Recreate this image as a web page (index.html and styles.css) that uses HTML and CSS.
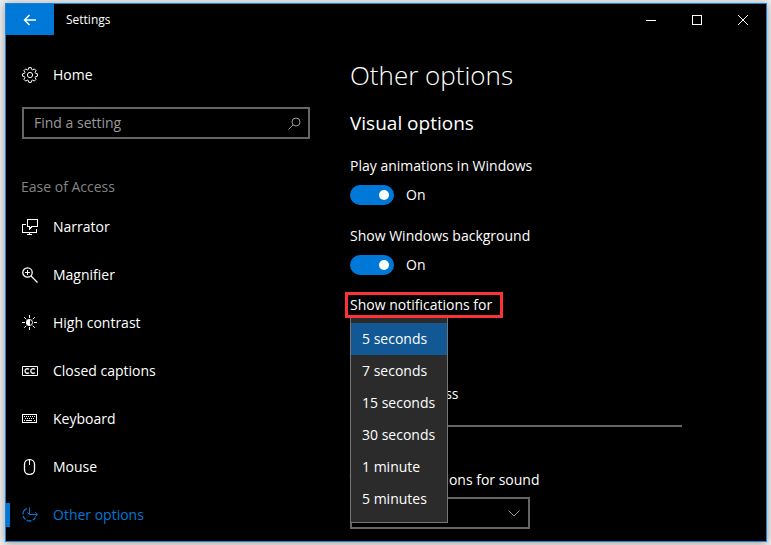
FILE: index.html
```
<!DOCTYPE html>
<html lang="en">
<head>
    <meta charset="UTF-8">
    <meta name="viewport" content="width=device-width, initial-scale=1.0">
    <title>Settings</title>
    <link rel="stylesheet" href="styles.css">
</head>
<body>
    <div class="window">
        <header class="titlebar">
            <button class="back" type="button" aria-label="Back">
                <svg width="14" height="12" viewBox="0 0 14 12"><path d="M13 6H1.5M6.5 1l-5 5 5 5"/></svg>
            </button>
            <span class="title">Settings</span>
            <button class="control" type="button" aria-label="Minimize">
                <svg width="10" height="10" viewBox="0 0 10 10" shape-rendering="crispEdges"><path d="M0 5.5h10"/></svg>
            </button>
            <button class="control" type="button" aria-label="Maximize">
                <svg width="10" height="10" viewBox="0 0 10 10" shape-rendering="crispEdges"><path d="M.5.5h9v9h-9z"/></svg>
            </button>
            <button class="control" type="button" aria-label="Close">
                <svg width="10" height="10" viewBox="0 0 10 10"><path d="M0 0l10 10M10 0L0 10"/></svg>
            </button>
        </header>

        <div class="content">
            <nav class="sidebar">
                <a class="item" href="#home">
                    <svg class="icon" viewBox="0 0 16 16">
                        <path d="M6.8.6h2.4l.4 1.8 1.1.5 1.6-1 1.8 1.8-1 1.6.5 1.1 1.8.4v2.4l-1.8.4-.5 1.1 1 1.6-1.8 1.8-1.6-1-1.1.5-.4 1.8H6.8l-.4-1.8-1.1-.5-1.6 1-1.8-1.8 1-1.6-.5-1.1-1.8-.4V6.8l1.8-.4.5-1.1-1-1.6 1.8-1.8 1.6 1 1.1-.5z"/>
                        <circle cx="8" cy="8" r="2.6"/>
                    </svg>
                    Home
                </a>
                <div class="search">
                    <input type="text" placeholder="Find a setting" aria-label="Find a setting">
                    <svg width="13" height="13" viewBox="0 0 13 13"><circle cx="8" cy="5" r="4"/><path d="M5 8L.5 12.5"/></svg>
                </div>
                <h3 class="group">Ease of Access</h3>
                <a class="item" href="#narrator">
                    <svg class="icon" viewBox="0 0 16 16" shape-rendering="crispEdges">
                        <path d="M4 5.5H.5v8h14V9.5M7.5 13.5v2M5 15.5h5M5.5.5h10v7H10L7.5 10V7.5h-2z"/>
                    </svg>
                    Narrator
                </a>
                <a class="item" href="#magnifier">
                    <svg class="icon" viewBox="0 0 16 16">
                        <circle class="bold" cx="5.500" cy="5.500" r="4.700"/>
                        <path class="bold" d="M9 9l6.500 6.500"/>
                        <path d="M5.500 3v5M3 5.500h5"/>
                    </svg>
                    Magnifier
                </a>
                <a class="item" href="#contrast">
                    <svg class="icon" viewBox="0 0 16 16">
                        <circle cx="7.5" cy="7.5" r="3"/>
                        <path class="solid" d="M7.5 4.5a3 3 0 0 0 0 6z"/>
                        <path d="M7.5 0v3M7.5 12v3M0 7.5h3M12 7.5h3M2.2 2.2l2.1 2.1M10.7 10.7l2.1 2.1M12.8 2.2l-2.1 2.1M4.3 10.7l-2.1 2.1"/>
                    </svg>
                    High contrast
                </a>
                <a class="item" href="#captions">
                    <svg class="icon" viewBox="0 0 16 16">
                        <path d="M.5 3.5h15v9H.5z"/>
                        <path class="bold" d="M7.200 6.300C5.200 5.100 3 6 3 8s2.200 2.900 4.200 1.700M13 6.300C11 5.100 8.800 6 8.800 8s2.200 2.900 4.200 1.700"/>
                    </svg>
                    Closed captions
                </a>
                <a class="item" href="#keyboard">
                    <svg class="icon" viewBox="0 0 16 16" shape-rendering="crispEdges">
                        <path d="M.5 3.5h14v8H.5zM2 5.5h1M4 5.5h1M6 5.5h1M8 5.5h1M10 5.5h1M12 5.5h1M3 7.5h1M5 7.5h1M7 7.5h1M9 7.5h1M11 7.5h1M2 9.5h1M4 9.5h6M12 9.5h1"/>
                    </svg>
                    Keyboard
                </a>
                <a class="item" href="#mouse">
                    <svg class="icon" viewBox="0 0 16 16">
                        <rect class="bold" x="2.5" y=".7" width="10" height="14.600" rx="4.500"/>
                        <path d="M7.5 1v5"/>
                    </svg>
                    Mouse
                </a>
                <a class="item active" href="#other" aria-current="page">
                    <svg class="icon" viewBox="0 0 16 16">
                        <path d="M7.5.5v7h8M13.200 5.200l2.300 2.300-2.300 2.300M5.500 5.500l2 2"/>
                        <path class="bold" d="M5 1.500A6.500 6.500 0 0 0 1 7.500M1.200 9A6.500 6.500 0 0 0 3.500 12.600M4.800 13.400A6.500 6.500 0 0 0 9.500 13.700M10.800 13.100A6.500 6.500 0 0 0 13.300 10.500"/>
                    </svg>
                    Other options
                </a>
            </nav>

            <main class="main">
                <h1>Other options</h1>
                <h2>Visual options</h2>

                <div class="field">
                    <label for="animations">Play animations in Windows</label>
                    <div class="switch">
                        <input type="checkbox" id="animations" checked>
                        <span>On</span>
                    </div>
                </div>
                <div class="field">
                    <label for="background">Show Windows background</label>
                    <div class="switch">
                        <input type="checkbox" id="background" checked>
                        <span>On</span>
                    </div>
                </div>
                <div class="field open">
                    <label class="marked" for="duration">Show notifications for</label>
                    <select class="menu" id="duration" size="6">
                        <option selected>5 seconds</option>
                        <option>7 seconds</option>
                        <option>15 seconds</option>
                        <option>30 seconds</option>
                        <option>1 minute</option>
                        <option>5 minutes</option>
                    </select>
                </div>
                <div class="field">
                    <label for="thickness">Cursor thickness</label>
                    <input class="slider" type="range" id="thickness" min="1" max="20" value="1">
                </div>
                <div class="field sound">
                    <label for="sound">Visual notifications for sound</label>
                    <div class="dropdown">
                        <select id="sound">
                            <option>None</option>
                        </select>
                        <svg width="12" height="7" viewBox="0 0 12 7"><path d="M.5.5L6 6 11.5.5"/></svg>
                    </div>
                </div>
            </main>
        </div>
    </div>
</body>
</html>
```
FILE: styles.css
```
* {
    box-sizing: border-box;
}

body {
    margin: 0;
    padding: 3px 4px 3px 5px;
    min-height: 100vh;
    display: flex;
    background-color: #ececec;
    font-family: "Open Sans", "Noto Sans", sans-serif;
    font-size: 14px;
    line-height: 20px;
    color: #fff;
}

button, input, select {
    font: inherit;
    color: inherit;
    margin: 0;
}

svg {
    fill: none;
    stroke: currentColor;
    flex-shrink: 0;
}

.window {
    flex: 1;
    border: 1px solid #1883d7;
    background-color: #000;
    box-shadow: 0 1px 8px rgba(0, 0, 0, 0.35);
}

/* title bar */
.titlebar {
    display: flex;
    height: 31px;
    font-size: 12px;
}

.titlebar button {
    display: flex;
    align-items: center;
    justify-content: center;
    padding: 0;
    border: none;
    background: none;
}

.titlebar .back {
    width: 48px;
    background-color: #0078d7;
}

.back svg {
    stroke-width: 1.4;
}

.titlebar .control {
    width: 46px;
}

.title {
    flex: 1;
    padding-left: 12px;
    line-height: 31px;
}

.content {
    display: flex;
}

/* left navigation */
.sidebar {
    width: 320px;
    flex-shrink: 0;
    padding-top: 16px;
}

.item {
    display: flex;
    align-items: center;
    gap: 15px;
    height: 48px;
    padding-left: 16px;
    color: #fff;
    text-decoration: none;
}

.icon {
    width: 16px;
    height: 16px;
}

.icon .solid {
    fill: currentColor;
}

.icon .bold {
    stroke-width: 1.3;
}

.active {
    position: relative;
    color: #0078d7;
}

.active::before {
    content: "";
    position: absolute;
    left: 0;
    width: 4px;
    height: 24px;
    background-color: #0078d7;
}

.search {
    display: flex;
    align-items: center;
    height: 32px;
    margin: 8px 16px 32px;
    padding: 0 7px 0 10px;
    border: 2px solid #666;
    color: #999;
}

.search input {
    flex: 1;
    min-width: 0;
    padding: 0;
    border: none;
    outline: none;
    background: none;
}

.search input::placeholder {
    color: #999;
}

.group {
    margin: 0;
    padding-left: 15px;
    font-size: 14px;
    font-weight: normal;
    line-height: 32px;
    color: #848484;
}

/* settings */
.main {
    flex: 1;
    min-width: 0;
    padding: 20px 24px 12px;
}

h1 {
    margin: 0;
    font-size: 26px;
    font-weight: 300;
    line-height: 40px;
}

h2 {
    margin: 14px 0 19px;
    font-size: 19px;
    font-weight: normal;
    line-height: 28px;
}

.field {
    display: flex;
    flex-direction: column;
    align-items: flex-start;
    gap: 9px;
    margin-bottom: 21px;
}

.switch {
    display: flex;
    align-items: center;
    gap: 12px;
}

.switch input {
    appearance: none;
    display: flex;
    align-items: center;
    width: 44px;
    height: 20px;
    padding: 0 5px;
    border-radius: 10px;
    background-color: #666;
}

.switch input::before {
    content: "";
    width: 10px;
    height: 10px;
    border-radius: 50%;
    background-color: #fff;
}

.switch input:checked {
    justify-content: flex-end;
    background-color: #0078d7;
}

/* opened list lies over the fields below */
.open {
    position: relative;
    padding-bottom: 47px;
}

.marked {
    position: relative;
    z-index: 2;
    margin: -4px 0 -2px -5px;
    padding: 0 8px 0 2px;
    border: 3px solid #fb3335;
}

.menu {
    position: absolute;
    z-index: 1;
    top: 21px;
    left: 0;
    width: 98px;
    padding: 5px 0 7px;
    border: 1px solid #767676;
    border-radius: 0;
    outline: none;
    background-color: #2b2b2b;
    overflow: hidden;
}

.menu option {
    padding: 6px 11px;
    min-height: 32px;
    line-height: 20px;
}

.menu option:checked {
    background: #115894 linear-gradient(#115894, #115894);
    color: #fff;
}

.slider {
    appearance: none;
    width: 100%;
    max-width: 332px;
    height: 26px;
    background: linear-gradient(#666, #666) center / 100% 2px no-repeat;
}

.slider::-webkit-slider-thumb {
    appearance: none;
    width: 8px;
    height: 24px;
    border-radius: 4px;
    background-color: #0078d7;
}

.sound {
    margin: 31px 0 0;
    gap: 7px;
}

.dropdown {
    display: grid;
    align-items: center;
    width: 180px;
    color: #999;
}

.dropdown select {
    grid-area: 1 / 1;
    appearance: none;
    width: 100%;
    height: 32px;
    padding: 0 10px;
    border: 2px solid #666;
    border-radius: 0;
    background-color: #000;
    color: #fff;
}

.dropdown svg {
    grid-area: 1 / 1;
    justify-self: end;
    margin-right: 10px;
    pointer-events: none;
}
```
